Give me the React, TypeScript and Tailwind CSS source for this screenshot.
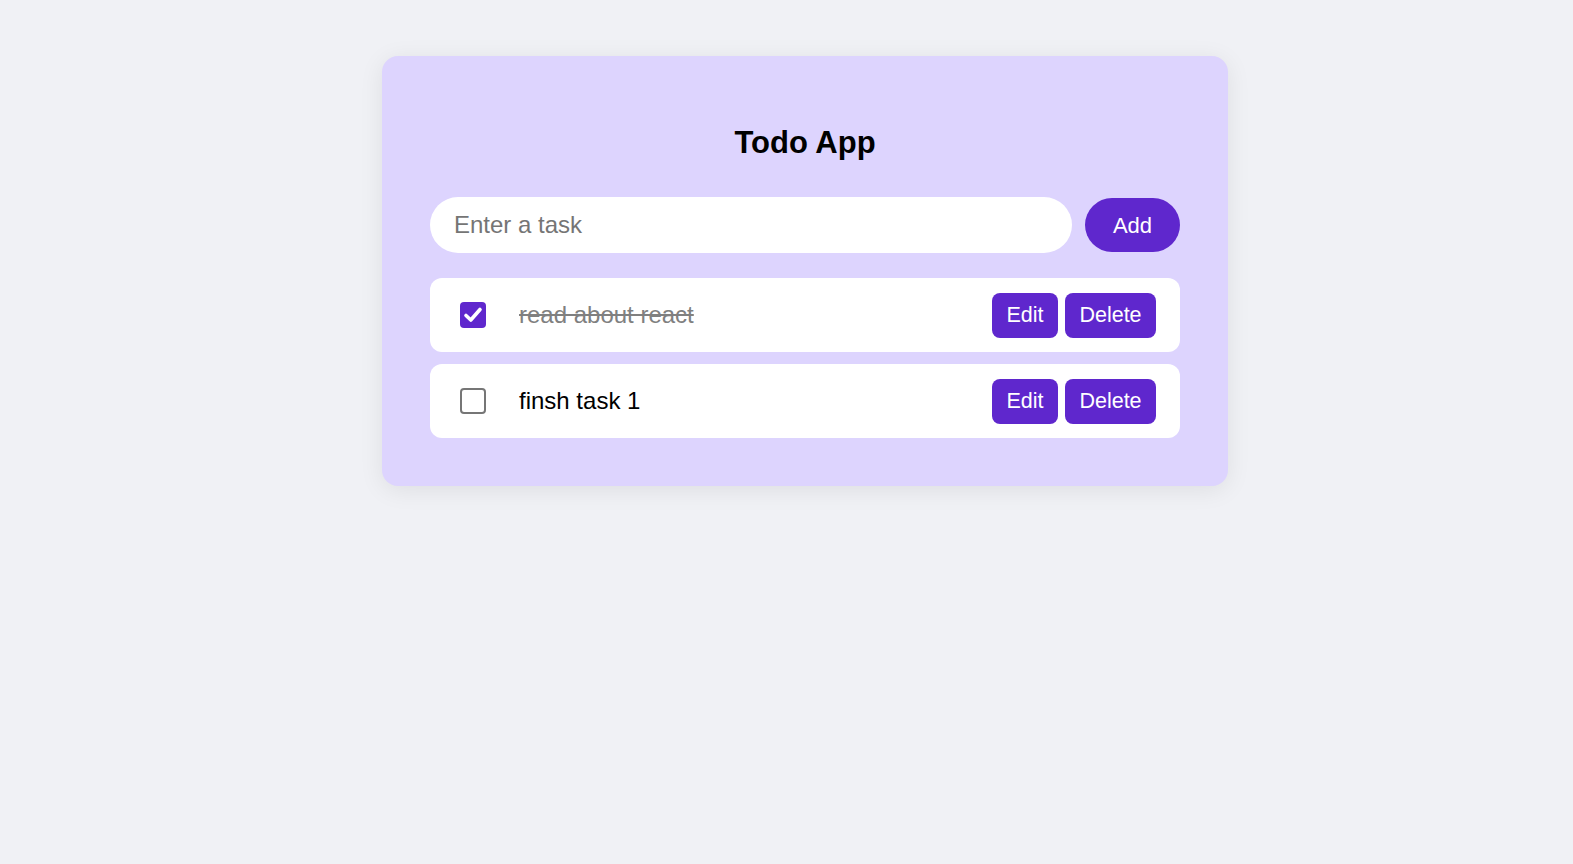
import React from "react";

const font = { fontFamily: '"Liberation Sans", Arial, sans-serif' };

function Check({ checked }: { checked: boolean }) {
  if (checked) {
    return (
      <div className="w-[26px] h-[26px] rounded-[4px] bg-[#5f27cd] flex items-center justify-center shrink-0">
        <svg width="22" height="22" viewBox="0 0 22 22">
          <path d="M4 11.5 L8.8 16 L18 5.5" fill="none" stroke="white" strokeWidth="3.6" strokeLinecap="round" strokeLinejoin="round" />
        </svg>
      </div>
    );
  }
  return <div className="w-[26px] h-[26px] rounded-[4px] border-2 border-[#767676] bg-white shrink-0" />;
}

function Item({ text, done }: { text: string; done: boolean }) {
  return (
    <div className="h-[74px] bg-white rounded-xl flex items-center pl-[30px] pr-[24px]">
      <Check checked={done} />
      <span
        className={
          "ml-[33px] text-[24px] flex-1 " +
          (done ? "line-through text-[#808080]" : "text-black")
        }
      >
        {text}
      </span>
      <div className="flex gap-[7px]">
        <button className="h-[45px] w-[66px] rounded-lg bg-[#5f27cd] text-white text-[21.5px]">Edit</button>
        <button className="h-[45px] w-[91px] rounded-lg bg-[#5f27cd] text-white text-[21.5px]">Delete</button>
      </div>
    </div>
  );
}

export default function App() {
  return (
    <div className="min-h-screen w-full bg-[#f0f1f5] flex justify-center pl-[37px] pt-[56px]" style={font}>
      <div className="w-[846px] h-[430px] bg-[#ddd4fe] rounded-2xl shadow-[0_4px_24px_rgba(0,0,0,0.08)] px-[48px] pt-[48px]">
        <div className="mt-[18px] mb-[33px] text-center font-bold text-[31px] leading-[42px] text-black">Todo App</div>
        <div className="flex gap-[13px] items-center">
          <input
            className="flex-1 h-[56px] rounded-full bg-white px-[24px] text-[24px] outline-none placeholder:text-[#757575]"
            placeholder="Enter a task"
          />
          <button className="w-[95px] h-[54px] rounded-full bg-[#5f27cd] text-white text-[22px]">Add</button>
        </div>
        <div className="mt-[25px] flex flex-col gap-[12px]">
          <Item text="read about react" done={true} />
          <Item text="finsh task 1" done={false} />
        </div>
      </div>
    </div>
  );
}
